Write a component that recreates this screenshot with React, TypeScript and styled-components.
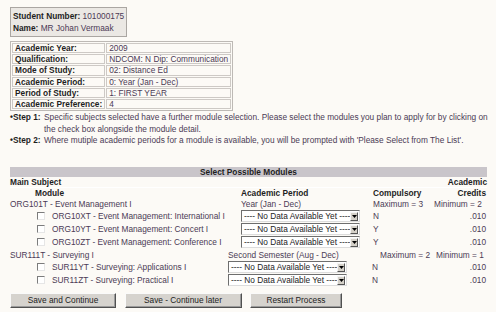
import React from "react";
import styled, { createGlobalStyle } from "styled-components";

const GlobalStyle = createGlobalStyle`
  html, body {
    margin: 0;
    padding: 0;
    background: #fcfaf6;
  }
  body {
    font-family: "Liberation Sans", Arial, sans-serif;
    font-size: 8.3px;
    color: #4b3a55;
  }
`;

const info = [
  ["Academic Year:", "2009"],
  ["Qualification:", "NDCOM: N Dip: Communication"],
  ["Mode of Study:", "02: Distance Ed"],
  ["Academic Period:", "0: Year (Jan - Dec)"],
  ["Period of Study:", "1: FIRST YEAR"],
  ["Academic Preference:", "4"],
];

const groups = [
  {
    subject: "ORG101T - Event Management I",
    period: "Year (Jan - Dec)",
    max: 3,
    min: 2,
    nameW: 231,
    periodW: 132,
    maxPad: 0,
    minGap: 11,
    modules: [
      { label: "ORG10XT - Event Management: International I", comp: "N" },
      { label: "ORG10YT - Event Management: Concert I", comp: "Y" },
      { label: "ORG10ZT - Event Management: Conference I", comp: "Y" },
    ],
  },
  {
    subject: "SUR111T - Surveying I",
    period: "Second Semester (Aug - Dec)",
    max: 2,
    min: 1,
    nameW: 218,
    periodW: 144,
    maxPad: 8,
    minGap: 6,
    modules: [
      { label: "SUR11YT - Surveying: Applications I", comp: "N" },
      { label: "SUR11ZT - Surveying: Practical I", comp: "N" },
    ],
  },
];

export default function App() {
  return (
    <>
      <GlobalStyle />
      <Page>
        <StudentBox>
          <div>
            <b>Student Number:</b> 101000175
          </div>
          <div>
            <b>Name:</b> MR Johan Vermaak
          </div>
        </StudentBox>

        <InfoTable>
          <tbody>
            {info.map(([k, v]) => (
              <tr key={k}>
                <InfoLabel>{k}</InfoLabel>
                <InfoValue>{v}</InfoValue>
              </tr>
            ))}
          </tbody>
        </InfoTable>

        <Steps>
          <Step>
            <StepLabel>•Step 1:</StepLabel>
            <StepText>
              Specific subjects selected have a further module selection. Please
              select the modules you plan to apply for by clicking on the check
              box alongside the module detail.
            </StepText>
          </Step>
          <Step>
            <StepLabel>•Step 2:</StepLabel>
            <StepText>
              Where mutiple academic periods for a module is available, you will
              be prompted with 'Please Select from The List'.
            </StepText>
          </Step>
        </Steps>

        <Modules>
          <HeaderBar>Select Possible Modules</HeaderBar>
          <HeadRow>
            <span>Main Subject</span>
            <span>Academic</span>
          </HeadRow>
          <Row $name={231} $period={132} $h={11} $bold>
            <ModuleHead>Module</ModuleHead>
            <span>Academic Period</span>
            <span>Compulsory</span>
            <Credit>Credits</Credit>
          </Row>

          {groups.map((g) => (
            <React.Fragment key={g.subject}>
              <Row $name={g.nameW} $period={g.periodW} $h={g.maxPad ? 12 : 11}>
                <span>{g.subject}</span>
                <span>{g.period}</span>
                <Limits $pad={g.maxPad} $gap={g.minGap}>
                  <span>Maximum = {g.max}</span>
                  <span>Minimum = {g.min}</span>
                </Limits>
              </Row>
              {g.modules.map((m) => (
                <Row key={m.label} $name={g.nameW} $period={g.periodW} $h={13}>
                  <ModuleName>
                    <Check />
                    <span>{m.label}</span>
                  </ModuleName>
                  <FakeSelect>
                    <span>---- No Data Available Yet ----</span>
                    <SelectArrow>
                      <svg width="5" height="3" viewBox="0 0 5 3">
                        <path d="M0 0h5L2.5 3z" fill="#000" />
                      </svg>
                    </SelectArrow>
                  </FakeSelect>
                  <span>{m.comp}</span>
                  <Credit>.010</Credit>
                </Row>
              ))}
            </React.Fragment>
          ))}
        </Modules>

        <Buttons>
          <Button $w={106}>Save and Continue</Button>
          <Button $w={117}>Save - Continue later</Button>
          <Button $w={92}>Restart Process</Button>
        </Buttons>
      </Page>
    </>
  );
}

const Page = styled.div`
  width: 496px;
  height: 312px;
  box-sizing: border-box;
  padding: 7px 8px 0 10px;
  overflow: hidden;
`;

const StudentBox = styled.div`
  display: inline-block;
  min-width: 112px;
  box-sizing: border-box;
  border: 1px solid #aaa6a2;
  background: #ebe8e4;
  padding: 2px 2px;
  line-height: 12px;
  white-space: nowrap;

  b {
    color: #1e1e1e;
  }
`;

const InfoTable = styled.table`
  margin-top: 4px;
  width: 218px;
  border-collapse: separate;
  border-spacing: 1px;
  border: 1px solid #bdb9b5;

  td {
    border: 1px solid #cdc9c5;
    padding: 0 2px;
    height: 8.2px;
    line-height: 8.2px;
    white-space: nowrap;
  }
`;

const InfoLabel = styled.td`
  width: 86px;
  font-weight: bold;
  color: #1e1e1e;
`;

const InfoValue = styled.td``;

const Steps = styled.div`
  margin-top: 1px;
  line-height: 11.5px;
`;

const Step = styled.div`
  display: flex;
`;

const StepLabel = styled.span`
  flex: 0 0 34px;
  font-weight: bold;
  color: #1e1e1e;
  white-space: nowrap;
`;

const StepText = styled.span`
  flex: 1;
`;

const Modules = styled.div`
  margin-top: 20px;
  width: 477px;
`;

const HeaderBar = styled.div`
  height: 10px;
  line-height: 10px;
  background: #c9c5ca;
  text-align: center;
  font-weight: bold;
  color: #1e1e1e;
`;

const HeadRow = styled.div`
  display: flex;
  justify-content: space-between;
  height: 10px;
  line-height: 10px;
  font-weight: bold;
  color: #1e1e1e;
  border-bottom: 1px solid #fff;
`;

const Row = styled.div<{ $name: number; $period: number; $h: number; $bold?: boolean }>`
  display: grid;
  grid-template-columns: ${(p) => p.$name}px ${(p) => p.$period}px 1fr auto;
  align-items: center;
  height: ${(p) => p.$h}px;
  white-space: nowrap;
  font-weight: ${(p) => (p.$bold ? "bold" : "normal")};
  color: ${(p) => (p.$bold ? "#1e1e1e" : "inherit")};
`;

const ModuleHead = styled.span`
  padding-left: 25px;
`;

const Credit = styled.span`
  text-align: right;
  padding-right: 1px;
`;

const Limits = styled.span<{ $pad: number; $gap: number }>`
  grid-column: 3 / 5;
  display: flex;
  gap: ${(p) => p.$gap}px;
  padding-left: ${(p) => p.$pad}px;
`;

const ModuleName = styled.span`
  display: flex;
  align-items: center;
  gap: 7px;
  padding-left: 27px;
`;

const Check = styled.span`
  width: 8px;
  height: 8px;
  box-sizing: border-box;
  border: 1px solid;
  border-color: #7c7c7c #e6e6e6 #e6e6e6 #7c7c7c;
  background: #fff;
`;

const FakeSelect = styled.div`
  width: 119px;
  height: 12px;
  box-sizing: border-box;
  display: flex;
  align-items: center;
  border: 1px solid;
  border-color: #6e6e6e #dcdcdc #dcdcdc #6e6e6e;
  background: #fff;
  color: #222;
  padding-left: 2px;
  overflow: hidden;
`;

const SelectArrow = styled.span`
  margin-left: auto;
  width: 9px;
  height: 9px;
  box-sizing: border-box;
  margin-right: 1px;
  display: flex;
  align-items: center;
  justify-content: center;
  background: #d4d0c8;
  border: 1px solid;
  border-color: #f4f4f4 #555 #555 #f4f4f4;
`;

const Buttons = styled.div`
  display: flex;
  gap: 8.5px;
  margin-top: 6px;
`;

const Button = styled.div<{ $w: number }>`
  width: ${(p) => p.$w}px;
  height: 15px;
  box-sizing: border-box;
  display: flex;
  align-items: center;
  justify-content: center;
  background: #d6d3ce;
  border: 1px solid;
  border-color: #fafafa #505050 #505050 #fafafa;
  box-shadow: inset -1px -1px #9a9a9a;
  color: #222;
`;
